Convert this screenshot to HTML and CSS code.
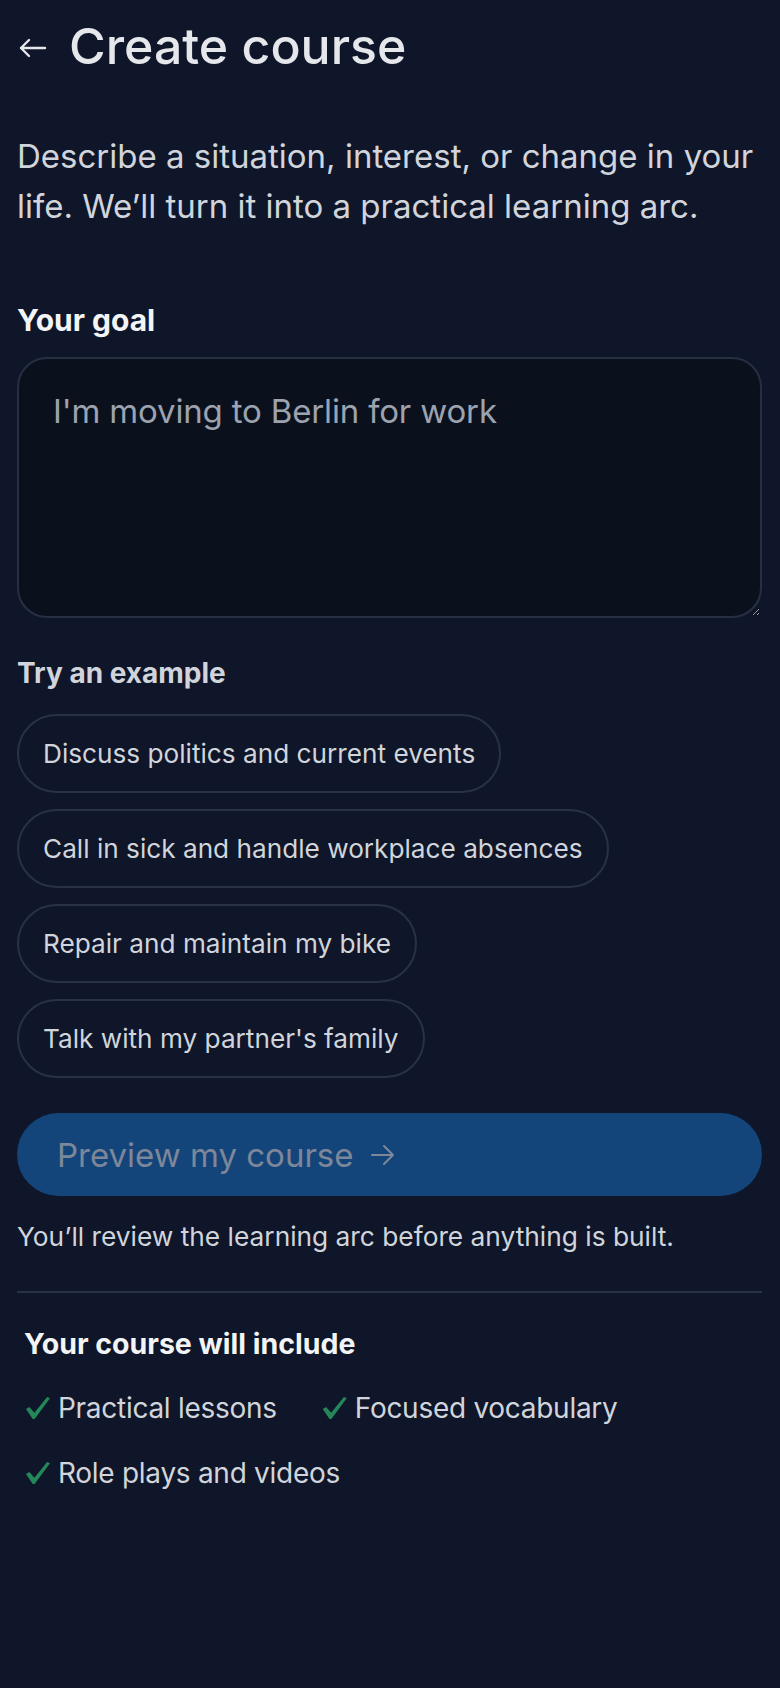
FILE: index.html
```html
<!DOCTYPE html>
<html lang="en">
<head>
    <meta charset="UTF-8">
    <meta name="viewport" content="width=device-width, initial-scale=1.0">
    <title>Create course</title>
    <link rel="stylesheet" href="styles.css">
</head>
<body>

    <header class="top">
        <a href="#" class="back" aria-label="Back">
            <svg width="28" height="20" viewBox="0 0 28 20" fill="none" stroke="currentColor" stroke-width="2.4" stroke-linecap="round" stroke-linejoin="round">
                <path d="M26 10H2M10 2L2 10L10 18"/>
            </svg>
        </a>
        <h1>Create course</h1>
    </header>

    <p class="intro">Describe a situation, interest, or change in your life. We’ll turn it into a practical learning arc.</p>

    <form class="goal-form">
        <label for="goal" class="field-label">Your goal</label>
        <textarea id="goal" name="goal" placeholder="I'm moving to Berlin for work"></textarea>

        <div class="examples-title">Try an example</div>
        <div class="chips">
            <button type="button" class="chip">Discuss politics and current events</button>
            <button type="button" class="chip">Call in sick and handle workplace absences</button>
            <button type="button" class="chip">Repair and maintain my bike</button>
            <button type="button" class="chip">Talk with my partner's family</button>
        </div>

        <button type="submit" class="preview-button" disabled>
            Preview my course
            <svg width="26" height="22" viewBox="0 0 26 22" fill="none" stroke="currentColor" stroke-width="2" stroke-linecap="round" stroke-linejoin="round">
                <path d="M2 11H23M14 2L23 11L14 20"/>
            </svg>
        </button>
    </form>

    <p class="note">You’ll review the learning arc before anything is built.</p>

    <hr class="divider">

    <!-- What the generated course contains -->
    <section class="includes">
        <h3>Your course will include</h3>
        <ul>
            <li><span class="check"></span>Practical lessons</li>
            <li><span class="check"></span>Focused vocabulary</li>
            <li><span class="check"></span>Role plays and videos</li>
        </ul>
    </section>

    <script>
        const goal = document.getElementById('goal');
        const previewButton = document.querySelector('.preview-button');

        document.querySelectorAll('.chip').forEach(chip => {
            chip.addEventListener('click', () => {
                goal.value = chip.innerText;
                previewButton.disabled = false;
            });
        });

        goal.addEventListener('input', () => {
            previewButton.disabled = goal.value.trim() === '';
        });
    </script>
</body>
</html>
```

FILE: styles.css
```css
body {
    font-family: Inter, "Noto Sans", sans-serif;
    margin: 0;
    padding: 18px 18px 40px 17px;
    background-color: #0f1629;
    color: #e5e7eb;
}
.top {
    display: flex;
    align-items: center;
    gap: 22px;
    height: 56px;
    padding-left: 2px;
}
.back {
    color: #e5e7eb;
    display: flex;
    margin-top: 4px;
}
.top h1 {
    margin: 0;
    font-size: 50px;
    font-weight: 500;
    line-height: 56px;
}
.intro {
    margin: 57px 0 0;
    font-size: 33px;
    line-height: 50px;
    color: #d1d5db;
}
.goal-form {
    display: flex;
    flex-direction: column;
    align-items: flex-start;
}
.field-label {
    margin-top: 71px;
    font-size: 30px;
    font-weight: 700;
    line-height: 36px;
    color: #f3f4f6;
}
textarea {
    box-sizing: border-box;
    width: 100%;
    height: 261px;
    margin-top: 19px;
    padding: 31px 34px;
    background-color: #0a111d;
    border: 2px solid #263042;
    border-radius: 30px;
    font-family: inherit;
    font-size: 33px;
    line-height: 43px;
    letter-spacing: -0.005em;
    color: #e5e7eb;
    outline: none;
}
textarea::placeholder {
    color: #9ca3af;
}
.examples-title {
    margin-top: 37px;
    font-size: 28px;
    font-weight: 700;
    line-height: 36px;
    color: #d1d5db;
}
.chips {
    display: flex;
    flex-direction: column;
    align-items: flex-start;
    gap: 16px;
    margin-top: 23px;
}
.chip {
    padding: 22px 24px;
    background: none;
    border: 2px solid #283244;
    border-radius: 999px;
    font-family: inherit;
    font-size: 26.2px;
    line-height: 31px;
    color: #d1d5db;
    cursor: pointer;
}
.preview-button {
    display: flex;
    align-items: center;
    gap: 16px;
    box-sizing: border-box;
    width: 100%;
    height: 83px;
    margin-top: 35px;
    padding: 0 40px;
    background-color: #13457a;
    border: none;
    border-radius: 999px;
    font-family: inherit;
    font-size: 33px;
    color: #7d8799;
    cursor: pointer;
}
.preview-button:disabled {
    cursor: default;
}
.note {
    margin: 24px 0 0;
    font-size: 26.3px;
    line-height: 34px;
    color: #d1d5db;
}
.divider {
    margin: 37px 0 0;
    border: none;
    border-top: 2px solid #283244;
}
.includes {
    padding-left: 7px;
}
.includes h3 {
    margin: 33px 0 0;
    font-size: 28.5px;
    font-weight: 700;
    line-height: 36px;
    color: #f3f4f6;
}
.includes ul {
    display: flex;
    flex-wrap: wrap;
    column-gap: 44px;
    row-gap: 25px;
    margin: 26px 0 0;
    padding: 0;
    list-style: none;
}
.includes li {
    display: flex;
    align-items: center;
    gap: 8px;
    font-size: 28px;
    line-height: 40px;
    letter-spacing: -0.01em;
    color: #d1d5db;
}
.check {
    width: 24px;
    height: 22px;
    margin-left: 2px;
    background-color: #23875a;
    clip-path: polygon(0 55%, 14% 45%, 35% 72%, 88% 0, 100% 6%, 36% 100%, 28% 100%);
}
```
